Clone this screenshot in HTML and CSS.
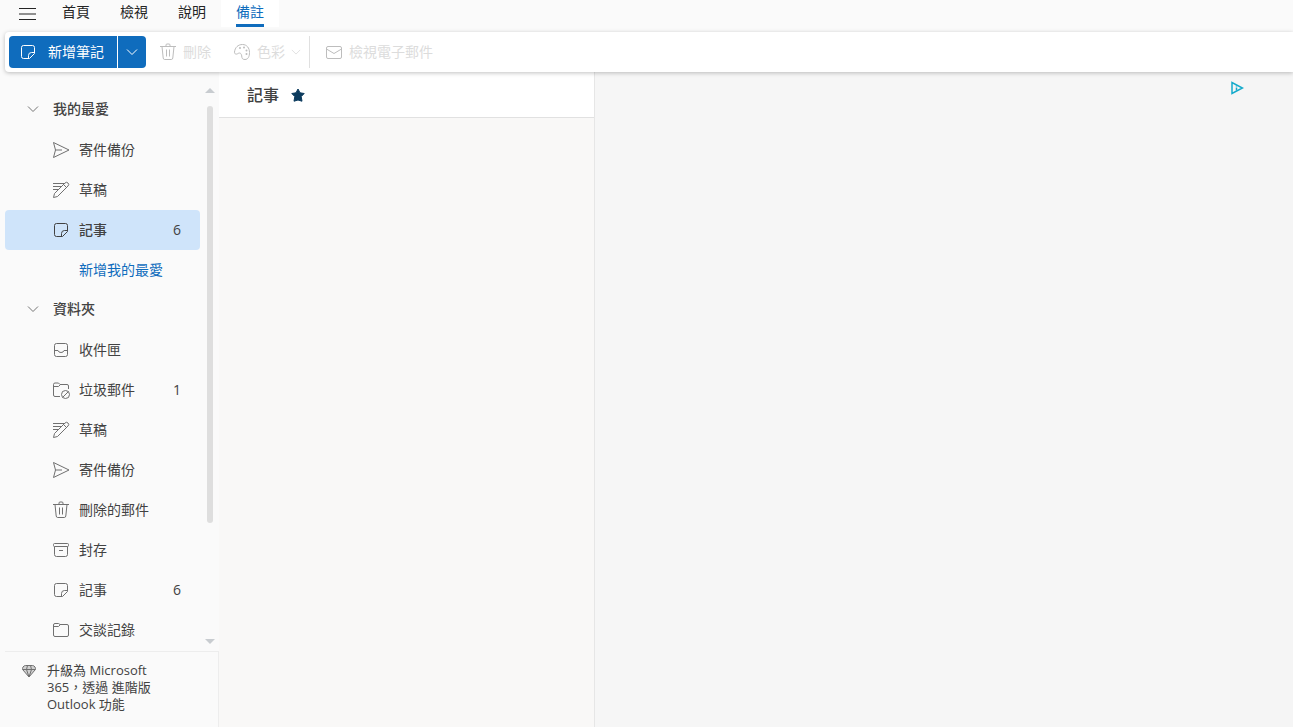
FILE: index.html
```html
<!doctype html>
<html lang="zh-Hant">
<head>
<title>備註 - Outlook</title>
<meta charset="utf-8" />
<meta name="viewport" content="width=device-width, initial-scale=1" />
<link rel="stylesheet" href="styles.css">
</head>

<body>
<!-- shared icons -->
<svg class="sprite" aria-hidden="true">
<symbol id="note" viewBox="0 0 18 18"><path d="M4.500 2.500h9a2 2 0 0 1 2 2v6l-5 5h-6a2 2 0 0 1-2-2v-9a2 2 0 0 1 2-2zM15.500 9.500h-3a3 3 0 0 0-3 3v3"/></symbol>
<symbol id="send" viewBox="0 0 18 18"><path d="M1.500 1.500L17 9 1.500 16.500 3.500 9zM3.500 9H10"/></symbol>
<symbol id="draft" viewBox="0 0 18 18"><path d="M1 2.500h11M1 5.500h8M1 8.500h5M1.500 16.500l1-4L13 2a1.900 1.900 0 0 1 3 3L5.500 15.500zM11.500 3.500l3 3"/></symbol>
<symbol id="inbox" viewBox="0 0 18 18"><rect x="2.500" y="2.500" width="13" height="13" rx="2"/><path d="M2.500 9.500H6q.5 2 3 2t3-2h3.500"/></symbol>
<symbol id="junk" viewBox="0 0 18 18"><path d="M8 15.500H3a1.500 1.500 0 0 1-1.500-1.500V3.500A1.500 1.500 0 0 1 3 2h3.500L8 3.500h7A1.500 1.500 0 0 1 16.500 5v3M1.500 5.500h5l2-2"/><circle cx="13.500" cy="13.500" r="4"/><path d="M10.700 16.300l5.600-5.600"/></symbol>
<symbol id="trash" viewBox="0 0 18 18"><path d="M1 3.500h16M7 3.500V2q0-1 1-1h2q1 0 1 1v1.500M3 3.500l1.200 11.500q.2 1.500 1.500 1.500h6.600q1.300 0 1.500-1.500L15 3.500M7.500 6.500v7M10.500 6.500v7"/></symbol>
<symbol id="archive" viewBox="0 0 18 18"><rect x="1.500" y="2.500" width="15" height="3" rx="1"/><path d="M2.500 5.500v8a2 2 0 0 0 2 2h9a2 2 0 0 0 2-2v-8M7 9.500h4"/></symbol>
<symbol id="folder" viewBox="0 0 18 18"><path d="M3 2.500h3.500l1.500 1h7A1.500 1.500 0 0 1 16.500 5v9a1.500 1.500 0 0 1-1.500 1.500H3A1.500 1.500 0 0 1 1.500 14V4A1.500 1.500 0 0 1 3 2.500zM1.500 5.500h5l2-2"/></symbol>
<symbol id="down" viewBox="0 0 12 12"><path d="M1 3.500l5 5 5-5"/></symbol>
</svg>

<header class="top">
<button class="menu" type="button" aria-label="選單"><svg viewBox="0 0 18 14"><path d="M1 1.500h17M1 7h17M1 12.500h17"/></svg></button>
<nav class="tabs">
<a href="#">首頁</a>
<a href="#">檢視</a>
<a href="#">說明</a>
<a href="#" class="active">備註</a>
</nav>
</header>

<div class="toolbar">
<div class="split">
<button class="new" type="button"><svg class="icon"><use href="#note"/></svg>新增筆記</button>
<button class="more" type="button" aria-label="更多"><svg class="chev"><use href="#down"/></svg></button>
</div>
<button class="tool" type="button" disabled><svg class="icon"><use href="#trash"/></svg>刪除</button>
<button class="tool" type="button" disabled>
<svg class="icon" viewBox="0 0 18 18"><path d="M1.500 9C2 4.500 5 1.500 9.500 1.500c4.300 0 7 3.500 7 8 0 4-1.500 7-4.500 7s-3-1.500-3.300-3.500c-.3-2.500-1.700-3.700-3.700-2.500-1.500 1-3.500 1-3.500-1.500z"/><g class="dots"><circle cx="7" cy="5" r="1"/><circle cx="11" cy="4.500" r="1"/><circle cx="13.500" cy="7.500" r="1"/><circle cx="13.500" cy="11" r="1"/></g></svg>色彩
<svg class="small"><use href="#down"/></svg>
</button>
<span class="line"></span>
<button class="tool" type="button" disabled><svg class="icon" viewBox="0 0 18 18"><rect x="1.500" y="3.500" width="15" height="12" rx="1.500"/><path d="M1.500 6l7.500 4.500L16.500 6"/></svg>檢視電子郵件</button>
</div>

<main>
<aside>
<div class="scroller">
<nav class="folders">
<button class="group" type="button"><svg class="chev"><use href="#down"/></svg>我的最愛</button>
<a href="#"><svg class="icon"><use href="#send"/></svg>寄件備份</a>
<a href="#"><svg class="icon"><use href="#draft"/></svg>草稿</a>
<a href="#" class="selected"><svg class="icon"><use href="#note"/></svg>記事<span class="count">6</span></a>
<a href="#" class="add">新增我的最愛</a>
<button class="group" type="button"><svg class="chev"><use href="#down"/></svg>資料夾</button>
<a href="#"><svg class="icon"><use href="#inbox"/></svg>收件匣</a>
<a href="#"><svg class="icon"><use href="#junk"/></svg>垃圾郵件<span class="count">1</span></a>
<a href="#"><svg class="icon"><use href="#draft"/></svg>草稿</a>
<a href="#"><svg class="icon"><use href="#send"/></svg>寄件備份</a>
<a href="#"><svg class="icon"><use href="#trash"/></svg>刪除的郵件</a>
<a href="#"><svg class="icon"><use href="#archive"/></svg>封存</a>
<a href="#"><svg class="icon"><use href="#note"/></svg>記事<span class="count">6</span></a>
<a href="#"><svg class="icon"><use href="#folder"/></svg>交談記錄</a>
</nav>
<div class="bar">
<span class="up"></span>
<div class="track"><div class="thumb"></div></div>
<span class="dn"></span>
</div>
</div>
<a href="#" class="upgrade">
<svg viewBox="0 0 16 14"><path class="gem" d="M4.500 1.500h7q1.500 0 2.500 1.500t0 3L8 13 2 6Q1 4.500 2 3t2.500-1.500z"/><path d="M1.500 5.500h13M6.500 1.500L5.500 5.500 8 13l2.500-7.500-1-4"/></svg>
<span>升級為 Microsoft 365，透過 進階版 Outlook 功能</span>
</a>
</aside>

<section class="list">
<h1>記事 <svg viewBox="0 0 14 14"><path d="M7 1l2 3.800 4.200.7-3 3.100.8 4.600L7 12l-4 1.200.8-4.600-3-3.100L5 4.800z"/></svg></h1>
</section>

<section class="pane"></section>
<section class="ad">
<svg viewBox="0 0 14 14"><path d="M2 1.500v11L12.500 7z"/><path d="M6.500 6.500v3M6.500 4.500v1"/></svg>
</section>
</main>
</body>
</html>
```

FILE: styles.css
```css
* {
box-sizing: border-box;
}
body {
margin: 0;
height: 100vh;
display: flex;
flex-direction: column;
overflow: hidden;
background: #fafafa;
color: #424242;
font-family: "Open Sans", "Noto Sans CJK TC", sans-serif;
font-size: 14px;
line-height: 20px;
}
a {
color: inherit;
text-decoration: none;
}
button {
margin: 0;
padding: 0;
border: 0;
background: none;
color: inherit;
font: inherit;
}
svg {
flex: none;
fill: none;
stroke: currentColor;
}
.sprite {
display: none;
}
.icon {
width: 18px;
height: 18px;
}
.chev {
width: 12px;
height: 12px;
}
.small {
width: 10px;
height: 10px;
}

/* top tabs */
.top {
display: flex;
height: 32px;
flex: none;
color: #242424;
}
.menu {
display: flex;
width: 47px;
height: 28px;
padding: 7px 0 0 18px;
}
.menu svg {
width: 18px;
height: 14px;
}
.tabs {
display: flex;
}
.tabs a {
height: 27px;
padding: 2px 15px 0;
}
.tabs .active {
background: #fff;
color: #0f6cbd;
}
.active::after {
content: "";
display: block;
height: 3px;
margin-top: 2px;
background: #0f6cbd;
}

/* toolbar */
.toolbar {
display: flex;
align-items: center;
flex: none;
height: 40px;
margin-left: 5px;
padding-left: 4px;
background: #fff;
border-radius: 4px 0 0 4px;
box-shadow: 0 1px 4px rgba(0,0,0,0.25);
color: #dcdcdc;
position: relative;
}
.split {
display: flex;
gap: 1px;
height: 32px;
margin-right: 13px;
color: #fff;
}
.split button {
display: flex;
align-items: center;
background: #0f6cbd;
}
.split .new {
gap: 11px;
width: 108px;
padding-left: 10px;
border-radius: 4px 0 0 4px;
}
.split .more {
width: 28px;
justify-content: center;
border-radius: 0 4px 4px 0;
}
.tool {
display: flex;
align-items: center;
gap: 6px;
margin-right: 22px;
color: #dcdcdc;
}
.tool .icon {
color: #bdbdbd;
}
.tool:has(.small) {
margin-right: 8px;
}
.dots {
fill: currentColor;
stroke: none;
}
.line {
width: 1px;
height: 32px;
margin-right: 15px;
background: #e0e0e0;
}

/* columns */
main {
display: flex;
flex: 1;
min-height: 0;
}
aside {
display: flex;
flex-direction: column;
width: 219px;
flex: none;
}
.scroller {
display: flex;
flex: 1;
min-height: 0;
padding-left: 5px;
}
.folders {
flex: 1;
padding-top: 18px;
overflow: hidden;
}
.folders a, .group {
display: flex;
align-items: center;
width: 100%;
height: 40px;
border-radius: 4px;
}
.folders a {
gap: 9px;
padding: 0 19px 0 47px;
}
.folders .icon {
color: #707070;
}
.group {
gap: 14px;
padding-left: 22px;
padding-bottom: 2px;
font-weight: 500;
}
.group .chev {
color: #757575;
}
.folders .selected {
background: #cfe4fa;
font-weight: 500;
}
.folders .selected .icon {
color: #424242;
}
.selected .count {
font-weight: 400;
}
.folders .add {
padding-left: 74px;
color: #0f6cbd;
}
.count {
margin-left: auto;
}
.bar {
display: flex;
flex-direction: column;
align-items: center;
width: 19px;
padding: 16px 0 7px;
}
.up, .dn {
border: 5px solid transparent;
}
.up {
border-top-width: 0;
border-bottom-color: #c8ccd0;
}
.dn {
border-bottom-width: 0;
border-top-color: #c8ccd0;
}
.track {
flex: 1;
padding: 13px 0 12px;
}
.thumb {
width: 6px;
height: 80%;
border-radius: 3px;
background: #dedede;
}
.upgrade {
display: flex;
gap: 10px;
height: 76px;
margin-left: 5px;
padding: 10px 60px 0 16px;
border-top: 1px solid #ededed;
border-right: 1px solid #ededed;
font-size: 13px;
line-height: 17px;
}
.upgrade svg {
width: 16px;
height: 14px;
margin-top: 2px;
color: #707070;
}
.gem {
fill: #d0d0d0;
}
.list {
width: 376px;
flex: none;
background: #f9f8f7;
border-right: 1px solid #e6e6e6;
}
.list h1 {
display: flex;
align-items: center;
gap: 12px;
height: 46px;
margin: 0;
padding-left: 28px;
background: #fff;
border-bottom: 1px solid #e1e1e1;
font-size: 16px;
font-weight: 500;
}
.list svg {
width: 14px;
height: 14px;
fill: #0c3b5e;
stroke: #0c3b5e;
stroke-linejoin: round;
}
.pane {
flex: 1;
background: #f6f6f6;
}
.ad {
width: 63px;
padding-top: 9px;
background: #f5f5f5;
}
.ad svg {
display: block;
width: 14px;
height: 14px;
stroke: #14aacb;
stroke-width: 1.5;
}
```
